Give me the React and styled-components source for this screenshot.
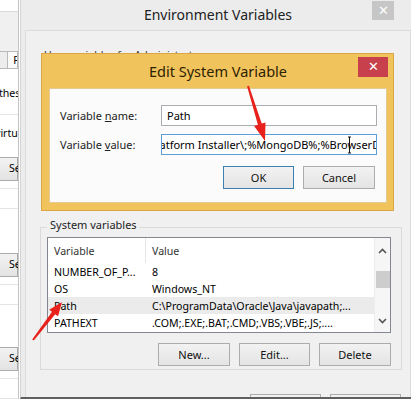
import styled, { createGlobalStyle } from "styled-components";

const Global = createGlobalStyle`
  html, body { margin: 0; padding: 0; background: #fff; }
  body { font-family: "Noto Sans", "Open Sans", sans-serif; font-size: 10.6px; color: #000; }
`;

const Page = styled.div`
  position: relative;
  width: 411px;
  height: 401px;
  overflow: hidden;
  display: flex;
  align-items: flex-start;
  background: #fff;
`;

/* background window on the left (System Properties) */
const LeftStrip = styled.div`
  width: 18px;
  height: 399px;
  border-right: 1px solid #c4c4c4;
  background: #f0f0f0;
  display: flex;
  flex-direction: column;
  overflow: hidden;
  flex-shrink: 0;
`;
const StripWhite = styled.div`
  height: 15px;
  background: #fff;
  border-bottom: 1px solid #dadada;
`;
const StripGap = styled.div`
  height: ${p => p.h}px;
  flex-shrink: 0;
`;
const TabRow = styled.div`
  height: 17px;
  display: flex;
  flex-shrink: 0;
`;
const Tab = styled.div`
  width: ${p => p.w}px;
  border: 1px solid #b9b9b9;
  border-bottom: none;
  margin-left: -1px;
  background: ${p => (p.active ? "#fafafa" : "#ededed")};
  padding-left: 5px;
  line-height: 16px;
  white-space: nowrap;
  overflow: hidden;
`;
const StripPanel = styled.div`
  flex: 1;
  background: #fff;
  border-top: 1px solid #b9b9b9;
  display: flex;
  flex-direction: column;
`;
const StripText = styled.div`
  height: ${p => p.h}px;
  padding-top: ${p => p.pt}px;
  box-sizing: border-box;
  white-space: nowrap;
  border-bottom: 1px solid ${p => (p.line ? "#e4e4e4" : "transparent")};
  flex-shrink: 0;
  span { display: inline-block; margin-left: ${p => p.shift}px; }
`;
const StripButton = styled.div`
  height: 22px;
  flex-shrink: 0;
  margin-left: -4px;
  background: linear-gradient(#f2f2f2, #e3e3e3);
  border: 1px solid #acacac;
  padding-left: 12px;
  line-height: 21px;
  white-space: nowrap;
`;

/* Environment Variables window */
const EnvWindow = styled.div`
  position: relative;
  width: 386px;
  height: 397px;
  flex-shrink: 0;
  margin-left: 1px;
  background: #ececec;
  border-left: 1px solid #d4d4d4;
  border-right: 2px solid #5f5f5f;
  border-bottom: 2px solid #5f5f5f;
  display: flex;
  flex-direction: column;
  padding: 0 7px 0 4px;
`;
const EnvTitle = styled.div`
  height: 30px;
  line-height: 30px;
  text-align: center;
  font-size: 14px;
  color: #222;
  flex-shrink: 0;
`;
const GrayClose = styled.div`
  position: absolute;
  left: 351px;
  top: 1px;
  width: 22px;
  height: 19px;
  background: #c6c6c6;
  color: #fff;
  font-size: 13px;
  line-height: 18px;
  text-align: center;
`;
const Client = styled.div`
  flex: 1;
  background: #f0f0f0;
  border-top: 1px solid #dcdcdc;
  border-left: 1px solid #dcdcdc;
  border-right: 1px solid #dcdcdc;
  padding: 0 8px 0 14px;
  display: flex;
  flex-direction: column;
  overflow: hidden;
`;
const UserSection = styled.div`
  height: 187px;
  padding: 17px 0 0 4px;
  box-sizing: border-box;
  color: #333;
  flex-shrink: 0;
`;
const Group = styled.fieldset`
  margin: 0;
  padding: 0 10px 3px 6px;
  border: 1px solid #dadada;
  flex-shrink: 0;
  min-width: 0;
`;
const Legend = styled.legend`
  padding: 0 2px 5px 3px;
  margin-left: 0;
  line-height: 14px;
  font-size: 11px;
  color: #222;
`;
const ListBox = styled.div`
  height: 94px;
  border: 1px solid #828790;
  background: #fff;
  display: grid;
  grid-template-columns: 1fr 16px;
`;
const ListMain = styled.div`
  display: flex;
  flex-direction: column;
`;
const Row = styled.div`
  display: grid;
  grid-template-columns: 98px 1fr;
  height: ${p => p.h || 17}px;
  align-items: center;
  background: ${p => (p.selected ? "#ebebeb" : "transparent")};
  white-space: nowrap;
  color: ${p => (p.header ? "#333" : "#000")};
`;
const Cell = styled.div`
  padding-left: 6px;
  height: 100%;
  display: flex;
  align-items: center;
  overflow: hidden;
  border-right: 1px solid ${p => (p.sep ? "#e6e6e6" : "transparent")};
`;
const ScrollBar = styled.div`
  background: #f6f6f6;
  border-left: 1px solid #eeeeee;
  display: flex;
  flex-direction: column;
  align-items: center;
`;
const ScrollArrow = styled.div`
  height: ${p => p.h}px;
  display: flex;
  align-items: center;
  justify-content: center;
`;
const Thumb = styled.div`
  width: 14px;
  height: 17px;
  background: #cdcdcd;
`;
const ScrollTrack = styled.div`
  flex: 1;
`;
const ButtonRow = styled.div`
  display: flex;
  justify-content: flex-end;
  gap: 9px;
  margin-top: ${p => p.mt}px;
  padding-right: ${p => p.pr || 0}px;
  flex-shrink: 0;
`;
const Button = styled.div`
  width: ${p => p.w || 72}px;
  height: 23px;
  box-sizing: border-box;
  border: 1px solid ${p => (p.primary ? "#3c7fb1" : "#acacac")};
  background: linear-gradient(#f2f2f2, #e4e4e4);
  display: flex;
  align-items: center;
  justify-content: center;
  font-size: 11px;
  color: #111;
  flex-shrink: 0;
`;

/* Edit System Variable dialog */
const EditDialog = styled.div`
  position: absolute;
  left: 20px;
  top: 53px;
  width: 353px;
  height: 158px;
  box-sizing: border-box;
  background: #f1c35d;
  border: 1px solid #dba744;
  padding: 0 6px 7px 7px;
  display: flex;
  flex-direction: column;
`;
const DialogTitle = styled.div`
  height: 34px;
  line-height: 34px;
  text-align: center;
  font-size: 14.5px;
  color: #2c2200;
  flex-shrink: 0;
`;
const RedClose = styled.div`
  position: absolute;
  right: 5px;
  top: 3px;
  width: 30px;
  height: 20px;
  background: #c8404c;
  color: #fff;
  font-size: 13px;
  line-height: 19px;
  text-align: center;
`;
const DialogBody = styled.div`
  flex: 1;
  background: #fbfbfb;
  border: 1px solid #e4cb93;
  padding: 16px 9px 0 10px;
  display: flex;
  flex-direction: column;
  gap: 8px;
`;
const FieldRow = styled.div`
  display: flex;
  align-items: center;
  height: 21px;
`;
const Label = styled.div`
  width: 101px;
  color: #222;
  font-size: 11px;
  u { text-decoration: underline; }
`;
const Field = styled.div`
  width: 216px;
  height: 21px;
  box-sizing: border-box;
  border: 1px solid ${p => (p.focused ? "#5c9fd8" : "#abadb3")};
  background: #fff;
  padding-left: 5px;
  line-height: 19px;
  white-space: nowrap;
  overflow: hidden;
  font-size: 11px;
  span { display: inline-block; margin-left: ${p => p.shift || 0}px; }
`;

const Chevron = ({ up }) => (
  <svg width="9" height="6" viewBox="0 0 9 6">
    <path d={up ? "M1 5 L4.5 1.5 L8 5" : "M1 1 L4.5 4.5 L8 1"} fill="none" stroke="#555" strokeWidth="1.6" />
  </svg>
);

const Overlay = styled.svg`
  position: absolute;
  left: 0;
  top: 0;
  pointer-events: none;
`;

const rows = [
  ["NUMBER_OF_P...", "8"],
  ["OS", "Windows_NT"],
  ["Path", "C:\\ProgramData\\Oracle\\Java\\javapath;..."],
  ["PATHEXT", ".COM;.EXE;.BAT;.CMD;.VBS;.VBE;.JS;...."],
];

export default function App() {
  return (
    <Page>
      <Global />
      <LeftStrip>
        <StripWhite />
        <StripGap h={39} />
        <TabRow>
          <Tab w={8} />
          <Tab w={14} active>F</Tab>
        </TabRow>
        <StripPanel>
          <StripText h={46} pt={17} shift={-1} line><span>these</span></StripText>
          <StripText h={42} pt={11} shift={-5}><span>virtual</span></StripText>
          <StripButton>Settings...</StripButton>
          <StripText h={8} line />
          <StripText h={20} line />
          <StripText h={44} />
          <StripButton>Settings...</StripButton>
          <StripText h={8} line />
          <StripText h={20} line />
          <StripText h={42} />
          <StripButton>Settings...</StripButton>
          <StripText h={8} line />
          <StripText h={20} line />
        </StripPanel>
      </LeftStrip>

      <EnvWindow>
        <EnvTitle>Environment Variables</EnvTitle>
        <GrayClose>✕</GrayClose>
        <Client>
          <UserSection>User variables for Administrator</UserSection>
          <Group>
            <Legend>System variables</Legend>
            <ListBox>
              <ListMain>
                <Row header h={25}>
                  <Cell sep>Variable</Cell>
                  <Cell>Value</Cell>
                </Row>
                {rows.map(([name, value]) => (
                  <Row key={name} selected={name === "Path"}>
                    <Cell>{name}</Cell>
                    <Cell>{value}</Cell>
                  </Row>
                ))}
              </ListMain>
              <ScrollBar>
                <ScrollArrow h={25}><Chevron up /></ScrollArrow>
                <ScrollArrow h={8} />
                <Thumb />
                <ScrollTrack />
                <ScrollArrow h={22}><Chevron /></ScrollArrow>
              </ScrollBar>
            </ListBox>
            <ButtonRow mt={10}>
              <Button>New...</Button>
              <Button w={71}>Edit...</Button>
              <Button>Delete</Button>
            </ButtonRow>
          </Group>
          <ButtonRow mt={24} pr={1}>
            <Button w={71}>OK</Button>
            <Button w={71}>Cancel</Button>
          </ButtonRow>
        </Client>

        <EditDialog>
          <DialogTitle>Edit System Variable</DialogTitle>
          <RedClose>✕</RedClose>
          <DialogBody>
            <FieldRow>
              <Label>Variable <u>n</u>ame:</Label>
              <Field>Path</Field>
            </FieldRow>
            <FieldRow>
              <Label>Variable <u>v</u>alue:</Label>
              <Field focused shift={-17}>
                <span>Platform Installer\;%MongoDB%;%BrowserDriver%</span>
              </Field>
            </FieldRow>
            <ButtonRow mt={3} pr={2}>
              <Button w={71} primary>OK</Button>
              <Button>Cancel</Button>
            </ButtonRow>
          </DialogBody>
        </EditDialog>
      </EnvWindow>

      <Overlay width="411" height="401" viewBox="0 0 411 401">
        <path d="M348 137 h3 M349.5 137 v16 M348 153 h3" stroke="#111" strokeWidth="1" fill="none" />
        <polygon
          points="247.05,86.3 257.9,124.8 254.1,126 265,141 265.5,122.4 261.7,123.6 248.95,85.7"
          fill="#e8211d"
        />
        <polygon
          points="33.8,340.6 55.2,314.2 58,316.3 62,302 49.2,309.7 52,311.8 32.2,339.4"
          fill="#e8211d"
        />
      </Overlay>
    </Page>
  );
}
